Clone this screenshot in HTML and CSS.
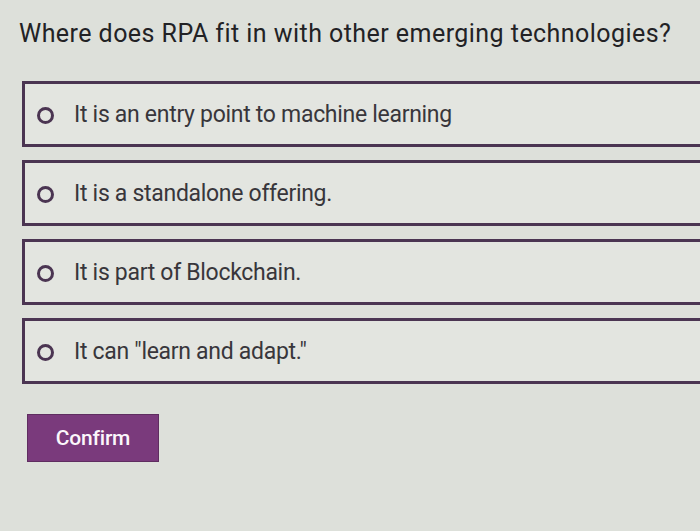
FILE: index.html
```html
<!DOCTYPE html>
<html lang="en">
<head>
<meta charset="utf-8">
<title>Quiz</title>
<link rel="stylesheet" href="styles.css">
</head>
<body>
<main class="quiz">
  <h1 class="question">Where does RPA fit in with other emerging technologies?</h1>
  <div class="options">
    <label class="option"><span class="radio"></span><span class="label">It is an entry point to machine learning</span></label>
    <label class="option"><span class="radio"></span><span class="label">It is a standalone offering.</span></label>
    <label class="option"><span class="radio"></span><span class="label">It is part of Blockchain.</span></label>
    <label class="option"><span class="radio"></span><span class="label">It can "learn and adapt."</span></label>
  </div>
  <button class="confirm" type="button">Confirm</button>
</main>
</body>
</html>
```
FILE: styles.css
```css
html, body {
  margin: 0;
  padding: 0;
  height: 100%;
  overflow: hidden;
}
body {
  background: #dde0da;
  font-family: Roboto, "Liberation Sans", sans-serif;
  color: #2a2a2c;
}
.quiz {
  padding: 19px 0 0 19px;
  display: flex;
  flex-direction: column;
  align-items: flex-start;
}
.question {
  margin: 0;
  font-size: 25px;
  line-height: 30px;
  font-weight: 400;
  color: #222225;
  letter-spacing: 0.45px;
}
.options {
  margin-top: 32px;
  margin-left: 3px;
  display: flex;
  flex-direction: column;
  gap: 13px;
  align-self: stretch;
}
.option {
  display: flex;
  align-items: center;
  height: 58px;
  padding-top: 2px;
  box-sizing: content-box;
  border: 3px solid #4b3552;
  border-right: none;
  background: #e3e5e0;
  padding-left: 12px;
}
.radio {
  width: 11px;
  height: 11px;
  border: 3px solid #4b3552;
  border-radius: 50%;
  flex: none;
}
.label {
  margin-left: 20px;
  font-size: 23px;
  line-height: 26px;
  color: #38363b;
  letter-spacing: -0.3px;
}
.confirm {
  margin-top: 30px;
  margin-left: 8px;
  width: 132px;
  height: 48px;
  border: 1px solid #5f2d60;
  background: #7a3a7c;
  color: #fbf6fb;
  font-family: Roboto, "Liberation Sans", sans-serif;
  font-size: 21px;
  font-weight: 500;
  letter-spacing: -0.2px;
  padding: 0;
  text-align: center;
}
```
